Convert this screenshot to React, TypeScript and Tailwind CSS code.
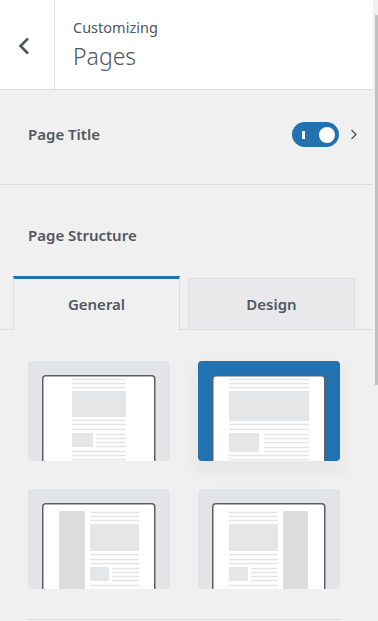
import React from "react";

type Layout = "boxed" | "full" | "left" | "right";

const FONT = { fontFamily: '"Noto Sans", "Open Sans", Arial, sans-serif' };

const lines = (x1: number, x2: number, ys: number[]) =>
  ys.map((y) => (
    <line key={`${x1}-${y}`} x1={x1} x2={x2} y1={y + 0.5} y2={y + 0.5} stroke="#e3e4e6" strokeWidth={1.3} />
  ));

const Pictogram: React.FC<{ layout: Layout }> = ({ layout }) => {
  let content: React.ReactNode = null;
  if (layout === "boxed") {
    content = (
      <>
        {lines(44, 98, [18, 22, 26])}
        <rect x={44} y={30} width={54} height={26} fill="#e5e6e8" />
        {lines(44, 98, [59, 63, 68])}
        <rect x={44} y={72} width={21} height={14} fill="#e5e6e8" />
        {lines(68, 98, [73, 77, 81, 85])}
        {lines(44, 98, [90, 94, 98])}
      </>
    );
  } else if (layout === "full") {
    content = (
      <>
        {lines(31, 111, [18, 22, 26])}
        <rect x={31} y={30} width={80} height={30} fill="#e5e6e8" />
        {lines(31, 111, [63, 68])}
        <rect x={31} y={72} width={30} height={19} fill="#e5e6e8" />
        {lines(66, 111, [73, 77, 81, 86, 90])}
        {lines(31, 111, [94, 98])}
      </>
    );
  } else if (layout === "left") {
    content = (
      <>
        <rect x={31} y={22} width={26} height={90} fill="#dcdedd" />
        {lines(62, 111, [23, 27, 31])}
        <rect x={62} y={35} width={49} height={27} fill="#e5e6e8" />
        {lines(62, 111, [65, 70, 74])}
        <rect x={62} y={78} width={19} height={14} fill="#e5e6e8" />
        {lines(84, 111, [79, 83, 87, 91])}
        {lines(62, 111, [96])}
      </>
    );
  } else {
    content = (
      <>
        <rect x={85} y={22} width={25} height={90} fill="#dcdedd" />
        {lines(31, 80, [23, 27, 31])}
        <rect x={31} y={35} width={49} height={27} fill="#e5e6e8" />
        {lines(31, 80, [65, 70, 74])}
        <rect x={31} y={78} width={19} height={14} fill="#e5e6e8" />
        {lines(53, 80, [79, 83, 87, 91])}
        {lines(31, 80, [96])}
      </>
    );
  }
  return (
    <svg width={142} height={100} viewBox="0 0 142 100" className="block">
      <path
        d="M14.75 104 V17.75 Q14.75 14.75 17.75 14.75 H123.75 Q126.75 14.75 126.75 17.75 V104"
        fill="#ffffff"
        stroke="#5b6067"
        strokeWidth={1.5}
      />
      {content}
    </svg>
  );
};

const LayoutCard: React.FC<{ layout: Layout; selected?: boolean }> = ({ layout, selected }) => (
  <div
    className={
      selected
        ? "w-[142px] h-[100px] rounded-[4px] overflow-hidden bg-[#2271b1] shadow-[0_8px_16px_6px_rgba(0,0,0,0.035)]"
        : "w-[142px] h-[100px] rounded-[4px] overflow-hidden bg-[#e3e4e8]"
    }
  >
    <Pictogram layout={layout} />
  </div>
);

export default function App() {
  return (
    <div className="w-[378px] h-[621px] overflow-hidden flex bg-[#f0f0f1] text-[#50575e]" style={FONT}>
      <div className="w-[373px] flex flex-col">
        <header className="h-[90px] shrink-0 bg-white border-b border-[#dcdcde] flex">
          <div className="w-[55px] border-r border-[#dcdcde] flex items-center pl-[18px] pt-[2px]">
            <svg width="12" height="18" viewBox="0 0 12 18">
              <polyline points="10,1.5 2.5,9 10,16.5" fill="none" stroke="#50575e" strokeWidth="2.6" />
            </svg>
          </div>
          <div className="pl-[18px] pt-[17px] flex flex-col">
            <span className="text-[14.5px] leading-[20px]">Customizing</span>
            <span className="text-[23px] leading-[30px] font-light mt-[4px]">Pages</span>
          </div>
        </header>

        <div className="h-[95px] shrink-0 border-b border-[#dcdcde] flex items-center pl-[28px] pr-[15px] pb-[5px]">
          <span className="text-[15px] font-semibold flex-1">Page Title</span>
          <div className="w-[47px] h-[25px] rounded-full bg-[#2271b1] flex items-center pl-[10px] pr-[4px]">
            <span className="w-[3px] h-[8px] bg-white" />
            <span className="ml-auto w-[16px] h-[16px] rounded-full bg-white" />
          </div>
          <svg width="8" height="11" viewBox="0 0 8 11" className="ml-[11px]">
            <polyline points="1.5,1 6,5.5 1.5,10" fill="none" stroke="#50575e" strokeWidth="1.4" />
          </svg>
        </div>

        <div className="pt-[38px] pl-[28px]">
          <span className="text-[15px] font-semibold leading-[22px]">Page Structure</span>
        </div>

        <div className="mt-[29px] flex items-end border-b border-[#dcdcde] pl-[13px] h-[54px]">
          <div className="w-[167px] h-[54px] -mb-px bg-[#f0f0f1] border-t-[3px] border-t-[#2271b1] border-x border-x-[#dcdcde] flex items-center justify-center text-[15px] font-semibold">
            General
          </div>
          <div className="w-[167px] h-[51px] ml-[8px] bg-[#e9e9eb] border border-[#dcdcde] border-b-0 flex items-center justify-center text-[15px] font-semibold">
            Design
          </div>
        </div>

        <div className="pt-[31px] pl-[28px] grid grid-cols-[142px_142px] gap-x-[28px] gap-y-[28px]">
          <LayoutCard layout="boxed" />
          <LayoutCard layout="full" selected />
          <LayoutCard layout="left" />
          <LayoutCard layout="right" />
        </div>

        <div className="mt-[30px] ml-[28px] w-[312px] border-t border-[#dcdcde]" />
      </div>
      <div className="w-[5px] pl-[2px] pt-[15px]">
        <div className="w-[3px] h-[370px] bg-[#c1c1c1]" />
      </div>
    </div>
  );
}
